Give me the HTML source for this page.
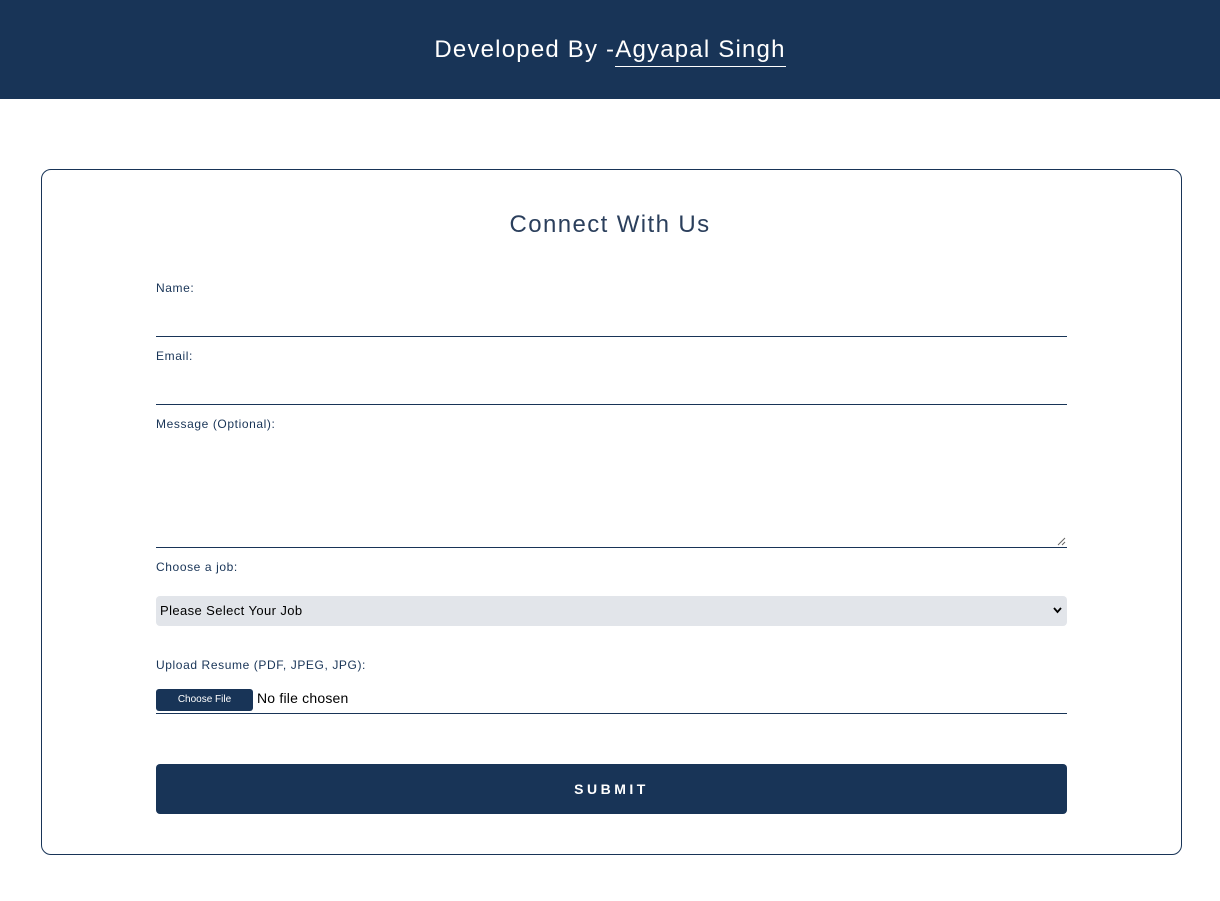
<!DOCTYPE html>
<html><head><style>
*{box-sizing:border-box;margin:0;padding:0}
body{width:1220px;height:901px;background:#fff;font-family:"Liberation Sans",sans-serif;color:#183457;position:relative;overflow:hidden}
.hdr{position:absolute;left:0;top:0;width:1220px;height:99px;background:#183457;color:#fff;font-size:24px;text-align:center;line-height:100px;letter-spacing:1.2px}
.hdr span{border-bottom:1px solid #fff;padding-bottom:3px}
.card{position:absolute;left:41px;top:169px;width:1141px;height:686px;border:1px solid #183457;border-radius:10px}
h2{position:absolute;left:0;width:100%;top:211px;text-align:center;font-weight:normal;font-size:24px;color:#2b3f5c;letter-spacing:1.4px}
.lbl{position:absolute;left:156px;font-size:12px;color:#183457;letter-spacing:0.6px}
.line{position:absolute;left:156px;width:911px;height:1px;background:#183457}
.sel{position:absolute;left:156px;top:596px;width:911px;height:30px;background:#e2e5ea;border-radius:4px;font-size:13px;color:#000;padding:7px 4px;letter-spacing:0.4px}
.btn{position:absolute;left:156px;top:689px;width:97px;height:22px;background:#183457;color:#fff;border-radius:3px;font-size:10px;text-align:center;line-height:22px}
.sub{position:absolute;left:156px;top:764px;width:911px;height:50px;background:#183457;color:#fff;border-radius:4px;text-align:center;line-height:51px;font-size:14px;letter-spacing:3.5px;font-weight:bold}
</style></head><body>
<div class="hdr">Developed By -<span>Agyapal Singh</span></div>
<div class="card"></div>
<h2>Connect With Us</h2>
<div class="lbl" style="top:281px">Name:</div>
<div class="line" style="top:336px"></div>
<div class="lbl" style="top:349px">Email:</div>
<div class="line" style="top:404px"></div>
<div class="lbl" style="top:417px">Message (Optional):</div>
<svg style="position:absolute;left:1057px;top:537px" width="9" height="9"><path d="M1 8L8 1M5 8L8 5" stroke="#666" stroke-width="1"/></svg>
<div class="line" style="top:547px"></div>
<div class="lbl" style="top:560px">Choose a job:</div>
<div class="sel">Please Select Your Job<svg style="position:absolute;right:5px;top:11px" width="9" height="7"><path d="M1 1L4.5 5L8 1" stroke="#000" stroke-width="1.8" fill="none"/></svg></div>
<div class="lbl" style="top:658px">Upload Resume (PDF, JPEG, JPG):</div>
<div class="btn">Choose File</div>
<div style="position:absolute;left:257px;top:690px;font-size:14px;color:#000;letter-spacing:0.2px">No file chosen</div>
<div class="line" style="top:713px"></div>
<div class="sub">SUBMIT</div>
</body></html>
